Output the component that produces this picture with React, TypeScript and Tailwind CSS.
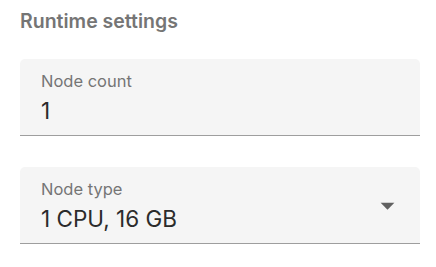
import React from "react";

function Field({ label, value, select }: { label: string; value: string; select?: boolean }) {
  return (
    <div className="relative h-[77px] w-[400px] rounded-t-[5px] border-b border-[#9e9e9e] bg-[#f5f5f5] pl-[21px]">
      <div className="pt-[12px] text-[16.5px] leading-[20px] text-[#757575]">{label}</div>
      <div className="mt-[6px] text-[22.5px] leading-[28px] text-[#2b2b2b]">{value}</div>
      {select && (
        <svg viewBox="0 0 24 24" className="absolute right-[16px] top-[22px] h-[33px] w-[33px] fill-[#616161]">
          <path d="M7 10l5 5 5-5z" />
        </svg>
      )}
    </div>
  );
}

export default function App() {
  return (
    <div className="h-[267px] w-[436px] bg-white px-5 pt-[9px]" style={{ fontFamily: "Inter, 'Noto Sans', sans-serif" }}>
      <h2 className="text-[19.5px] font-semibold leading-[24px] text-[#757575]">Runtime settings</h2>
      <div className="mt-[26px] flex flex-col gap-[31px]">
        <Field label="Node count" value="1" />
        <Field label="Node type" value="1 CPU, 16 GB" select />
      </div>
    </div>
  );
}
